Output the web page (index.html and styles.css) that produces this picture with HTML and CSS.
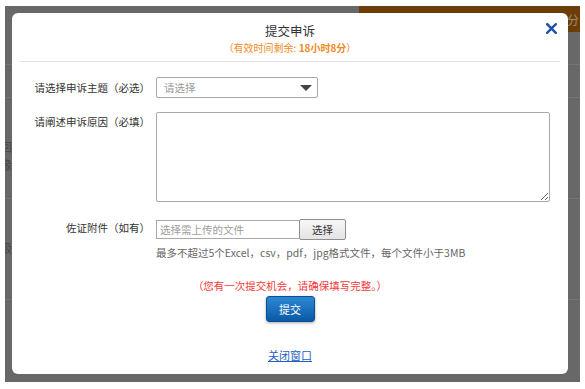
FILE: index.html
```html
<!DOCTYPE html>
<html lang="zh-CN">
<head>
    <meta charset="UTF-8">
    <meta name="viewport" content="width=device-width, initial-scale=1.0">
    <title>提交申诉</title>
    <link rel="stylesheet" href="styles.css">
</head>
<body>
    <div class="screen">
        <div class="backdrop">
            <div class="topbar"><span class="topbar-text">分</span></div>
            <div class="bg-row"></div>
            <div class="bg-row"></div>
            <div class="bg-row bg-tall"><span class="bg-cell">回<br>缘</span></div>
            <div class="bg-row bg-tall"><span class="bg-cell">级</span></div>
        </div>

        <div class="dialog">
            <a class="close-x" href="#" title="关闭">
                <svg width="11" height="11" viewBox="0 0 11 11"><path d="M1.2 1.2 L9.8 9.8 M9.8 1.2 L1.2 9.8" stroke="#1d4fae" stroke-width="2.4" stroke-linecap="square"/></svg>
            </a>
            <div class="dialog-head">
                <div class="dialog-title">提交申诉</div>
                <div class="dialog-sub">（有效时间剩余: <b>18小时8分</b>）</div>
            </div>

            <form class="form">
                <label class="form-label">请选择申诉主题（必选）</label>
                <div class="select">
                    <span class="select-text">请选择</span>
                    <span class="select-arrow"></span>
                </div>

                <label class="form-label label-top">请阐述申诉原因（必填）</label>
                <textarea class="reason"></textarea>

                <label class="form-label">佐证附件（如有）</label>
                <div class="file-row">
                    <input class="file-input" type="text" placeholder="选择需上传的文件">
                    <button type="button" class="file-btn">选择</button>
                </div>

                <span></span>
                <div class="hint">最多不超过5个Excel，csv，pdf，jpg格式文件，每个文件小于3MB</div>
            </form>

            <div class="warn">（您有一次提交机会，请确保填写完整。）</div>
            <div class="actions">
                <button type="button" class="submit">提交</button>
            </div>
            <div class="actions">
                <a class="close-link" href="#">关闭窗口</a>
            </div>
        </div>
    </div>
</body>
</html>
```

FILE: styles.css
```css
body { margin: 0; background: #fff; font-family: "Noto Sans CJK SC", "Noto Sans", sans-serif; font-size: 10.5px; color: #333; }
.screen { position: relative; margin: 6px 5px; width: 575px; height: 376px; background: #686868; overflow: hidden; }

/* page behind the overlay */
.backdrop { display: flex; flex-direction: column; }
.topbar { margin-left: 354px; height: 26px; background: #6b3d07; display: flex; justify-content: flex-end; align-items: center; }
.topbar-text { color: #a08a6c; font-size: 12px; margin-right: 1px; }
.bg-row { height: 32px; border-bottom: 1px solid #747474; }
.bg-tall { height: 100px; }
.bg-cell { display: block; margin-left: -5px; padding-top: 40px; color: #4a4a4a; font-size: 12px; line-height: 18px; }

/* dialog */
.dialog { position: absolute; left: 7px; top: 7px; width: 556px; height: 361px; background: #fff; border-radius: 6px; }
.close-x { position: absolute; right: 11px; top: 10px; display: block; width: 11px; height: 11px; }
.close-x svg { display: block; }
.dialog-head { margin: 0 8px; padding-top: 9px; padding-bottom: 6px; border-bottom: 1px solid #e3e3e3; text-align: center; }
.dialog-title { font-size: 12.5px; line-height: 17px; color: #333; }
.dialog-sub { margin-top: 2px; font-size: 10px; line-height: 14px; color: #f08a24; }
.dialog-sub b { font-weight: bold; }

.form { display: grid; grid-template-columns: 138px 1fr; column-gap: 6px; row-gap: 13px; margin-top: 15px; align-items: center; }
.form-label { text-align: right; color: #333; white-space: nowrap; }
.label-top { align-self: start; padding-top: 3px; }

.select { box-sizing: border-box; width: 162px; height: 21px; border: 1px solid #a9a9a9; border-radius: 2px; display: flex; align-items: center; justify-content: space-between; padding: 0 4px 0 7px; }
.select-text { color: #9a9a9a; }
.select-arrow { width: 0; height: 0; border-left: 6px solid transparent; border-right: 6px solid transparent; border-top: 6px solid #444; margin-right: 1px; }

.reason { width: 390px; height: 86px; margin: 1px 0 0; padding: 1px; border: 1px solid #a9a9a9; border-radius: 2px; font: inherit; resize: both; }

.file-row { display: flex; align-items: center; margin-top: 4px; }
.file-input { width: 136px; height: 17px; margin: 0; padding: 0 3px; border: 1px solid #a9a9a9; border-right: 0; font: inherit; }
.file-input::placeholder { color: #9d9d9d; }
.file-btn { width: 47px; height: 21px; margin: 0; padding: 0; border: 1px solid #8e8e8e; border-radius: 2px; background: linear-gradient(#f7f7f7, #e4e4e4); font: inherit; color: #333; }

.hint { margin-top: -7px; color: #666; line-height: 14px; }

.warn { margin-top: 19px; text-align: center; color: #f53a3a; line-height: 14px; }
.actions { display: flex; justify-content: center; }
.submit { margin-top: 3px; width: 49px; height: 26px; padding: 0; border: 1px solid #0b4f92; border-radius: 3px; background: linear-gradient(#2d88d4, #0a5aa6); color: #fff; font: inherit; font-size: 11px; box-shadow: 0 1px 3px rgba(0, 0, 0, 0.35); cursor: pointer; }
.close-link { margin-top: 26px; color: #2360c2; font-size: 11px; line-height: 14px; text-decoration: underline; }
```
